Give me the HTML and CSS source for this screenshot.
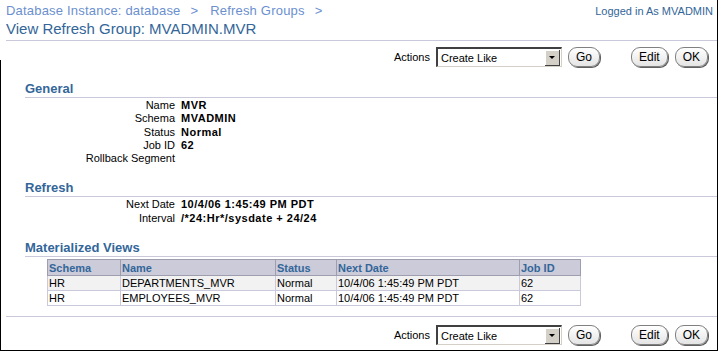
FILE: index.html
```html
<!DOCTYPE html>
<html lang="en">
<head>
  <meta charset="UTF-8">
  <title>View Refresh Group: MVADMIN.MVR</title>
  <link rel="stylesheet" href="styles.css">
</head>
<body>
  <div class="page">
    <div class="top">
      <div class="crumbs">
        <a href="#">Database Instance: database</a><span class="sep">&gt;</span><a href="#">Refresh Groups</a><span class="sep">&gt;</span>
      </div>
      <div class="login">Logged in As MVADMIN</div>
    </div>
    <h1 class="title">View Refresh Group: MVADMIN.MVR</h1>

    <div class="actions">
      <span class="actions-label">Actions</span>
      <div class="select"><span>Create Like</span><span class="drop"></span></div>
      <button class="btn">Go</button>
      <span class="spacer"></span>
      <button class="btn">Edit</button>
      <button class="btn btn-ok">OK</button>
    </div>

    <div class="section first">
      <h2>General</h2>
      <div class="props">
        <span class="lbl">Name</span><span class="val">MVR</span>
        <span class="lbl">Schema</span><span class="val">MVADMIN</span>
        <span class="lbl">Status</span><span class="val">Normal</span>
        <span class="lbl">Job ID</span><span class="val">62</span>
        <span class="lbl">Rollback Segment</span><span class="val"></span>
      </div>
    </div>

    <div class="section">
      <h2>Refresh</h2>
      <div class="props">
        <span class="lbl">Next Date</span><span class="val">10/4/06 1:45:49 PM PDT</span>
        <span class="lbl">Interval</span><span class="val">/*24:Hr*/sysdate + 24/24</span>
      </div>
    </div>

    <div class="section">
      <h2>Materialized Views</h2>
      <table class="grid">
        <thead>
          <tr><th class="c1">Schema</th><th class="c2">Name</th><th class="c3">Status</th><th class="c4">Next Date</th><th class="c5">Job ID</th></tr>
        </thead>
        <tbody>
          <tr><td>HR</td><td>DEPARTMENTS_MVR</td><td>Normal</td><td>10/4/06 1:45:49 PM PDT</td><td>62</td></tr>
          <tr><td>HR</td><td>EMPLOYEES_MVR</td><td>Normal</td><td>10/4/06 1:45:49 PM PDT</td><td>62</td></tr>
        </tbody>
      </table>
    </div>

    <div class="actions bottom">
      <span class="actions-label">Actions</span>
      <div class="select"><span>Create Like</span><span class="drop"></span></div>
      <button class="btn">Go</button>
      <span class="spacer"></span>
      <button class="btn">Edit</button>
      <button class="btn btn-ok">OK</button>
    </div>
  </div>
</body>
</html>
```

FILE: styles.css
```css
body {
  margin: 0;
  background: #fff;
  font-family: Tahoma, "Liberation Sans", sans-serif;
  font-size: 11px;
  color: #000;
}

.page {
  position: relative;
  width: 717px;
  height: 350px;
  border-right: 1px solid #000;
  border-bottom: 1px solid #000;
  box-sizing: content-box;
}

/* left frame edge only shows below the header */
.page::before {
  content: "";
  position: absolute;
  left: 0;
  top: 60px;
  bottom: 0;
  width: 1px;
  background: #000;
}

.top {
  display: flex;
  justify-content: space-between;
  align-items: baseline;
  padding: 3px 4px 0 6px;
}

.crumbs a {
  color: #6b8fcf;
  text-decoration: none;
  font-size: 13px;
  letter-spacing: 0.2px;
}

.crumbs .sep {
  color: #6b8fcf;
  font-size: 13px;
  margin: 0 12px 0 10px;
}

.login {
  color: #336699;
  font-size: 11px;
}

.title {
  margin: 2px 0 0 6px;
  padding-bottom: 2px;
  font-size: 15px;
  font-weight: normal;
  color: #336699;
  border-bottom: 1px solid #c9c9db;
  line-height: 18px;
}

.actions {
  display: flex;
  align-items: center;
  justify-content: flex-end;
  padding: 6px 9px 0 0;
  height: 20px;
}

.actions.bottom {
  margin-left: 6px;
  border-top: 1px solid #c9c9db;
  padding-top: 8px;
  margin-top: 10px;
}

.actions-label {
  margin-right: 6px;
  font-size: 11px;
}

.select {
  display: flex;
  align-items: center;
  justify-content: space-between;
  width: 126px;
  height: 20px;
  box-sizing: border-box;
  border-top: 2px solid #404040;
  border-left: 2px solid #404040;
  border-right: 1px solid #d4d0c8;
  border-bottom: 1px solid #d4d0c8;
  padding-left: 3px;
  background: #fff;
  font-size: 11px;
}

.drop {
  position: relative;
  width: 15px;
  height: 16px;
  margin-right: 1px;
  background: #d4d0c8;
  border-right: 1px solid #404040;
  border-bottom: 1px solid #404040;
  box-sizing: border-box;
  box-shadow: inset 1px 1px 0 #fff;
}

.drop::after {
  content: "";
  position: absolute;
  left: 4px;
  top: 6px;
  border-left: 3px solid transparent;
  border-right: 3px solid transparent;
  border-top: 3px solid #000;
}

.btn {
  height: 20px;
  margin-left: 6px;
  padding: 0 7px;
  border: 1px solid #808080;
  border-radius: 9px;
  background: linear-gradient(#ffffff, #e4e4e4);
  box-shadow: 1px 1px 0 #606060;
  font-family: Tahoma, "Liberation Sans", sans-serif;
  font-size: 12px;
  color: #000;
}

.btn-ok {
  margin-left: 7px;
}

.spacer {
  width: 25px;
}

.section {
  margin-left: 25px;
}

.section h2 {
  margin: 15px 0 1px;
  padding-bottom: 0;
  font-size: 13px;
  font-weight: bold;
  color: #336699;
  border-bottom: 1px solid #c9c9db;
  line-height: 16px;
}

.section.first h2 {
  margin-top: 14px;
}

.props {
  display: grid;
  grid-template-columns: 150px auto;
  column-gap: 6px;
  line-height: 13.3px;
}

.lbl {
  text-align: right;
}

.val {
  font-weight: bold;
  letter-spacing: 0.5px;
}

.grid {
  margin: 2px 0 0 22px;
  border-collapse: collapse;
  border: 1px solid #c9c9db;
  font-size: 11px;
}

.grid th {
  background: #cccbd9;
  color: #336699;
  text-align: left;
  font-weight: bold;
  height: 15px;
  padding: 0 1px;
  border: 1px solid #9e9eae;
}

.grid td {
  height: 14px;
  padding: 0 1px;
  border: 1px solid #c9c9db;
}

.grid tbody tr:first-child td {
  background: #f2f2f2;
}

.c1 { width: 70px; }
.c2 { width: 152px; }
.c3 { width: 58px; }
.c4 { width: 180px; }
.c5 { width: 58px; }
```
